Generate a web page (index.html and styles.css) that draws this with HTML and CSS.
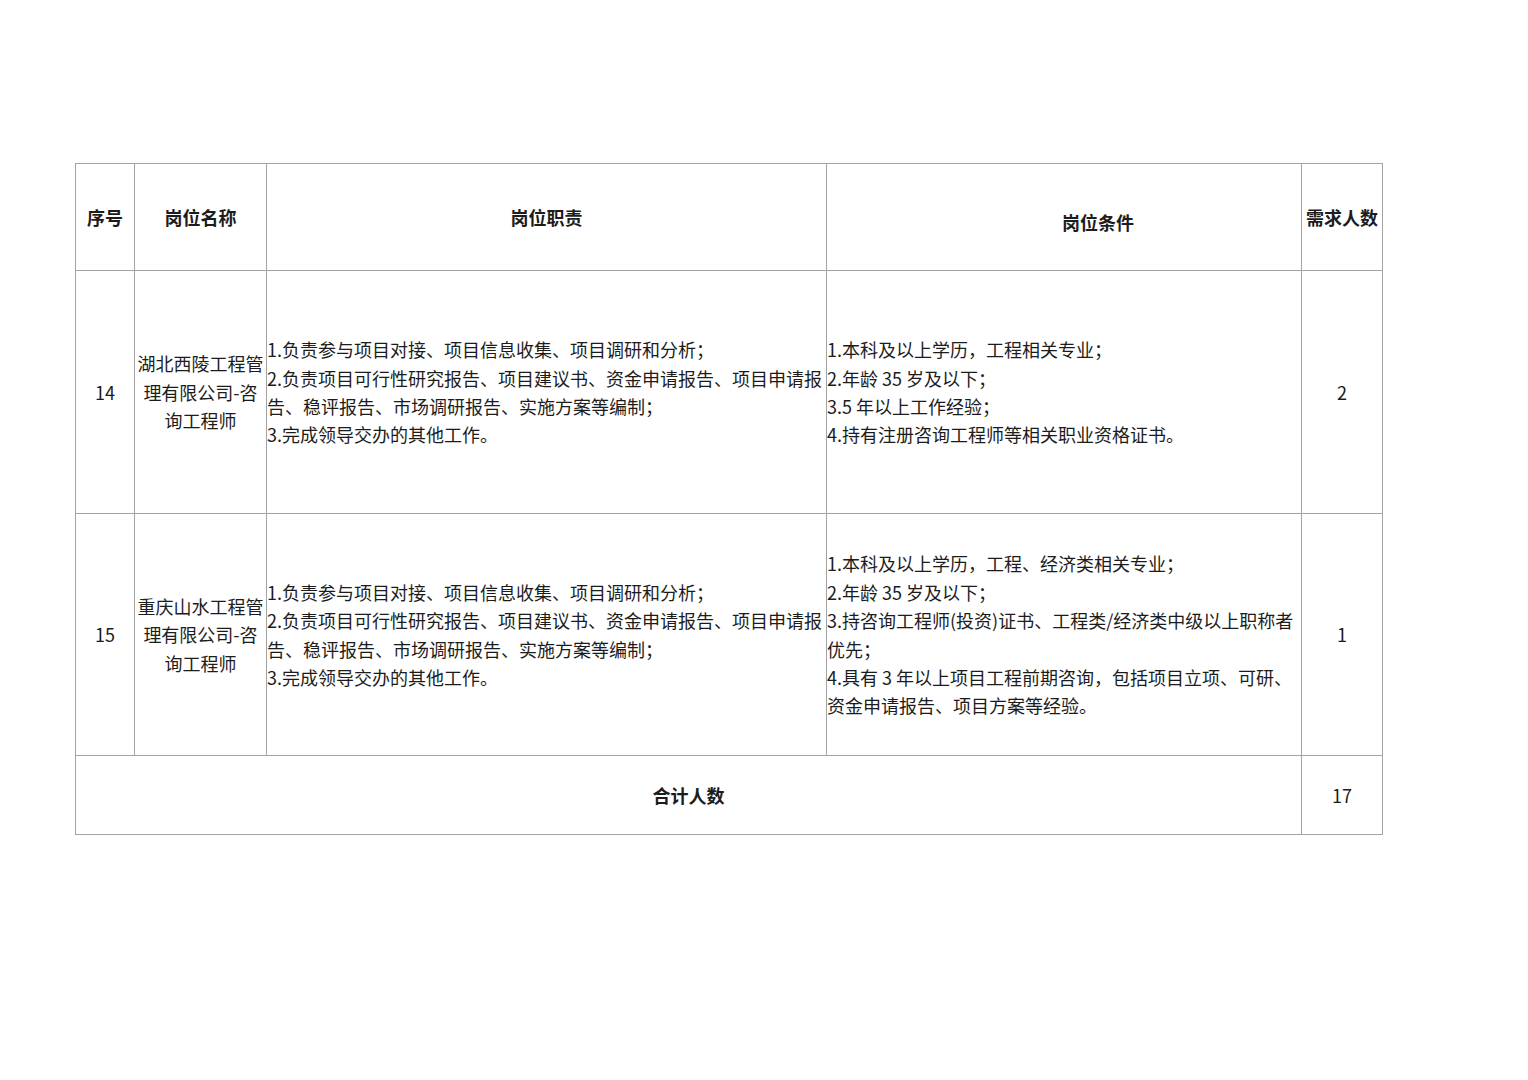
FILE: index.html
```html
<!DOCTYPE html>
<html lang="zh-CN">
<head>
<meta charset="utf-8">
<title>岗位表</title>
<link rel="stylesheet" href="styles.css">
</head>
<body>
<div class="page">
  <table class="jobs">
    <colgroup>
      <col class="c-no">
      <col class="c-name">
      <col class="c-duty">
      <col class="c-req">
      <col class="c-num">
    </colgroup>
    <thead>
      <tr class="head">
        <th>序号</th>
        <th>岗位名称</th>
        <th>岗位职责</th>
        <th class="lower">岗位条件</th>
        <th>需求人数</th>
      </tr>
    </thead>
    <tbody>
      <tr class="row-a">
        <td class="center">14</td>
        <td class="center">湖北西陵工程管理有限公司-咨询工程师</td>
        <td class="left">1.负责参与项目对接、项目信息收集、项目调研和分析；<br>2.负责项目可行性研究报告、项目建议书、资金申请报告、项目申请报告、稳评报告、市场调研报告、实施方案等编制；<br>3.完成领导交办的其他工作。</td>
        <td class="left">1.本科及以上学历，工程相关专业；<br>2.年龄 35 岁及以下；<br>3.5 年以上工作经验；<br>4.持有注册咨询工程师等相关职业资格证书。</td>
        <td class="center">2</td>
      </tr>
      <tr class="row-b">
        <td class="center">15</td>
        <td class="center">重庆山水工程管理有限公司-咨询工程师</td>
        <td class="left">1.负责参与项目对接、项目信息收集、项目调研和分析；<br>2.负责项目可行性研究报告、项目建议书、资金申请报告、项目申请报告、稳评报告、市场调研报告、实施方案等编制；<br>3.完成领导交办的其他工作。</td>
        <td class="left">1.本科及以上学历，工程、经济类相关专业；<br>2.年龄 35 岁及以下；<br>3.持咨询工程师(投资)证书、工程类/经济类中级以上职称者优先；<br>4.具有 3 年以上项目工程前期咨询，包括项目立项、可研、资金申请报告、项目方案等经验。</td>
        <td class="center">1</td>
      </tr>
      <tr class="total">
        <td colspan="4" class="center strong">合计人数</td>
        <td class="center">17</td>
      </tr>
    </tbody>
  </table>
</div>
</body>
</html>
```
FILE: styles.css
```css
html, body {
  margin: 0;
  padding: 0;
  background: #ffffff;
}

body {
  font-family: "Noto Sans CJK SC", "Noto Sans", sans-serif;
  font-size: 18px;
  color: #1c1c1c;
}

.page {
  padding: 163px 0 0 75px;
}

.jobs {
  border-collapse: collapse;
  table-layout: fixed;
  width: 1307px;
}

.c-no { width: 59px; }
.c-name { width: 132px; }
.c-duty { width: 560px; }
.c-req { width: 475px; }
.c-num { width: 81px; }

.jobs th,
.jobs td {
  border: 1px solid #a3a3a3;
  padding: 0;
  vertical-align: middle;
  line-height: 28.4px;
}

.jobs th {
  font-weight: 700;
  text-align: center;
}

.head th {
  height: 106px;
}

.head th.lower {
  height: 96px;
  padding: 10px 0 0 68px;
}

.row-a td {
  height: 242px;
}

.row-b td {
  height: 241px;
}

.total td {
  height: 78px;
}

.center {
  text-align: center;
}

.left {
  text-align: left;
}

.strong {
  font-weight: 700;
}
```
